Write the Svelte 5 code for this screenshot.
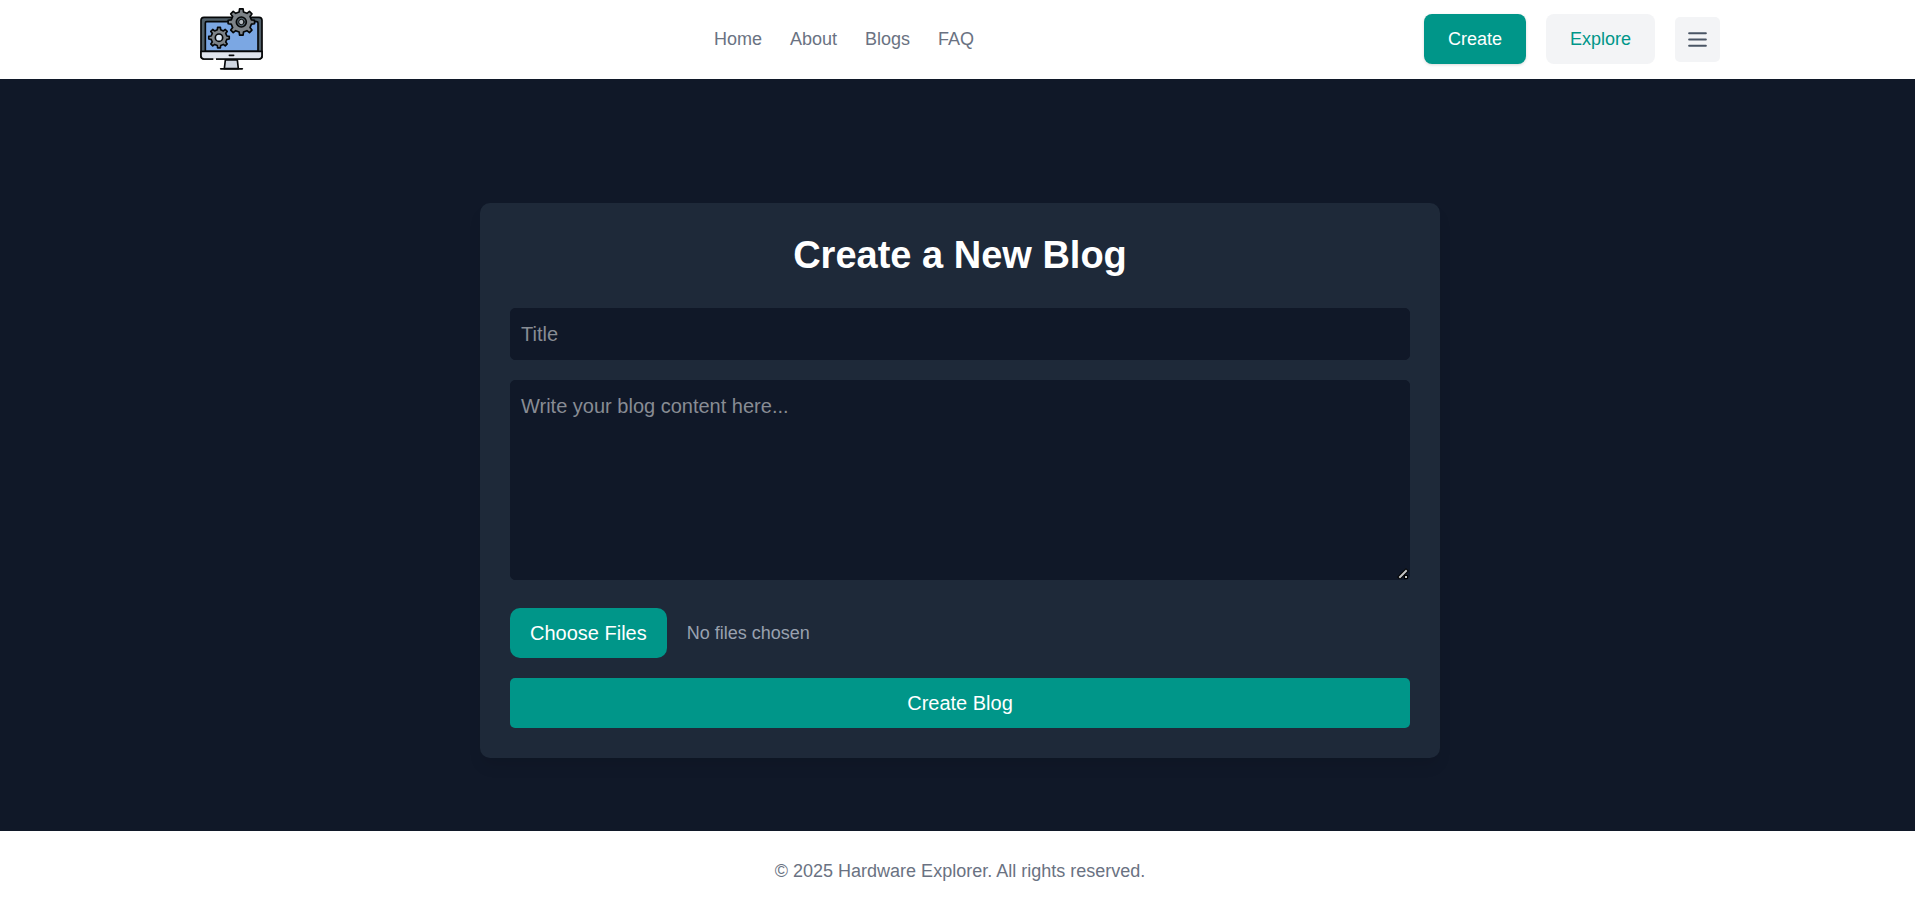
<script>
  const links = ['Home', 'About', 'Blogs', 'FAQ'];

  let title = $state('');
  let content = $state('');
  let files = $state();

  const chosen = $derived(
    !files?.length ? 'No files chosen' : files.length === 1 ? files[0].name : `${files.length} files`
  );

  // Closed outline of a cog with tapered teeth, first tooth pointing up.
  function gear(cx, cy, outer, inner, teeth = 8) {
    const step = (Math.PI * 2) / teeth;
    const points = [];
    for (let i = 0; i < teeth; i++) {
      const a = i * step - Math.PI / 2;
      for (const [r, d] of [[inner, -0.27], [outer, -0.17], [outer, 0.17], [inner, 0.27]]) {
        const t = a + d * step;
        points.push(`${(cx + r * Math.cos(t)).toFixed(1)} ${(cy + r * Math.sin(t)).toFixed(1)}`);
      }
    }
    return `M${points.join('L')}Z`;
  }
</script>

<div class="page">
  <header>
    <div class="bar">
      <a class="logo" href="#home" aria-label="Hardware Explorer">
        <svg viewBox="30 22 192 192" stroke="#050708" stroke-width="5" stroke-linejoin="round" stroke-linecap="round">
          <path d="M106 181h36l3 26h-42z" fill="#cfd6e0" />
          <path d="M92 207.500h65" fill="none" />
          <rect x="33" y="53" width="183" height="125" rx="9" fill="#51606a" />
          <path d="M46 155V70q0-4 4-4h150q4 0 4 4v85z" fill="#7ba7e3" />
          <path d="M33 155h183v14q0 9-9 9H42q-9 0-9-9z" fill="#dfe5ee" />
          <path d="M118 167h13" fill="none" />
          <path d="M70 178.500h8" stroke="#fff" stroke-width="6" stroke-linecap="butt" fill="none" />
          <path d={gear(87, 114, 31, 24)} fill="#7d8388" />
          <circle cx="87" cy="114" r="11" fill="#dce8f5" />
          <path d={gear(154, 67, 40, 31)} fill="#7d8388" />
          <circle cx="154" cy="67" r="15" fill="#51606a" />
          <circle cx="154" cy="67" r="8" fill="#b4babf" stroke-width="3" />
        </svg>
      </a>

      <nav aria-label="Main">
        {#each links as link}
          <a href={`#${link.toLowerCase()}`}>{link}</a>
        {/each}
      </nav>

      <div class="actions">
        <a class="button primary" href="#create">Create</a>
        <a class="button" href="#explore">Explore</a>
        <button class="menu" type="button" aria-label="Menu">
          <svg viewBox="0 0 24 24" fill="none" stroke="currentColor" stroke-width="2" stroke-linecap="round">
            <path d="M4 6h16M4 12h16M4 18h16" />
          </svg>
        </button>
      </div>
    </div>
  </header>

  <main>
    <form class="card" onsubmit={(e) => e.preventDefault()}>
      <h1>Create a New Blog</h1>
      <input class="field" type="text" placeholder="Title" aria-label="Title" bind:value={title} />
      <textarea class="field" placeholder="Write your blog content here..." aria-label="Content" bind:value={content}></textarea>
      <div class="upload">
        <input id="files" type="file" multiple bind:files />
        <label for="files">Choose Files</label>
        <span>{chosen}</span>
      </div>
      <button class="submit" type="submit">Create Blog</button>
    </form>
  </main>

  <footer>© 2025 Hardware Explorer. All rights reserved.</footer>
</div>

<style>
  :global(body) {
    margin: 0;
    overflow-x: hidden;
    background: #fff;
  }

  .page,
  .page * {
    box-sizing: border-box;
  }

  .page {
    display: flex;
    flex-direction: column;
    width: calc(100% + 5px);
    min-height: 100vh;
    font-family: 'Liberation Sans', Arial, sans-serif;
    font-size: 18px;
    line-height: 30px;
    color: #6a7282;
  }

  a {
    color: inherit;
    text-decoration: none;
  }

  header {
    background: #fff;
  }

  .bar {
    display: flex;
    align-items: center;
    justify-content: space-between;
    max-width: 1600px;
    margin: 0 auto;
    padding: 7px 40px 8px;
  }

  .logo svg {
    display: block;
    width: 64px;
    height: 64px;
  }

  nav {
    display: flex;
    gap: 28px;
  }

  .actions {
    display: flex;
    align-items: center;
    gap: 20px;
  }

  .button {
    padding: 10px 24px;
    border-radius: 8px;
    background: #f3f4f6;
    color: #009689;
  }

  .button.primary {
    background: #009689;
    color: #fff;
    box-shadow: 0 1px 3px rgb(0 0 0 / 0.15);
  }

  .menu {
    padding: 10px;
    border: 0;
    border-radius: 5px;
    background: #f3f4f6;
    color: #4a5565;
  }

  .menu svg {
    display: block;
    width: 25px;
    height: 25px;
  }

  main {
    flex: 1;
    padding: 124px 40px 73px;
    background: #101828;
  }

  .card {
    display: flex;
    flex-direction: column;
    gap: 20px;
    max-width: 960px;
    margin: 0 auto;
    padding: 30px;
    border-radius: 10px;
    background: #1e2939;
    box-shadow: 0 10px 15px -3px rgb(0 0 0 / 0.1);
  }

  h1 {
    margin: 0 0 10px;
    font-size: 38px;
    line-height: 45px;
    text-align: center;
    color: #fff;
  }

  .field {
    display: block;
    width: 100%;
    padding: 10px;
    border: 1px solid #101828;
    border-radius: 5px;
    background: #101828;
    color: #fff;
    font: inherit;
    font-size: 20px;
    line-height: 30px;
  }

  input.field {
    height: 52px;
  }

  textarea {
    height: 200px;
    resize: vertical;
  }

  textarea::-webkit-resizer {
    background: url("data:image/svg+xml,%3Csvg xmlns='http://www.w3.org/2000/svg' viewBox='0 0 15 15'%3E%3Cg fill='none' stroke-linecap='square'%3E%3Cpath d='M6 13l6-6M12 13h0' stroke='%23000' stroke-width='4'/%3E%3Cpath d='M6 13l6-6M12 13h0' stroke='%23c4c4c4' stroke-width='2'/%3E%3C/g%3E%3C/svg%3E") center / 15px 15px no-repeat;
  }

  .field::placeholder {
    color: #888c94;
    opacity: 1;
  }

  .upload {
    position: relative;
    display: flex;
    align-items: center;
    gap: 20px;
    margin-top: 8px;
    color: #99a1af;
  }

  .upload input {
    position: absolute;
    width: 1px;
    height: 1px;
    margin: 0;
    overflow: hidden;
    clip-path: inset(50%);
  }

  .upload label {
    padding: 10px 20px;
    border-radius: 10px;
    background: #009689;
    color: #fff;
    font-size: 20px;
    cursor: pointer;
  }

  .upload input:focus-visible + label {
    outline: 2px solid #fff;
  }

  .submit {
    padding: 10px;
    border: 0;
    border-radius: 5px;
    background: #009689;
    color: #fff;
    font: inherit;
    font-size: 20px;
  }

  footer {
    padding: 25px 20px 19px;
    background: #fff;
    text-align: center;
  }
</style>
